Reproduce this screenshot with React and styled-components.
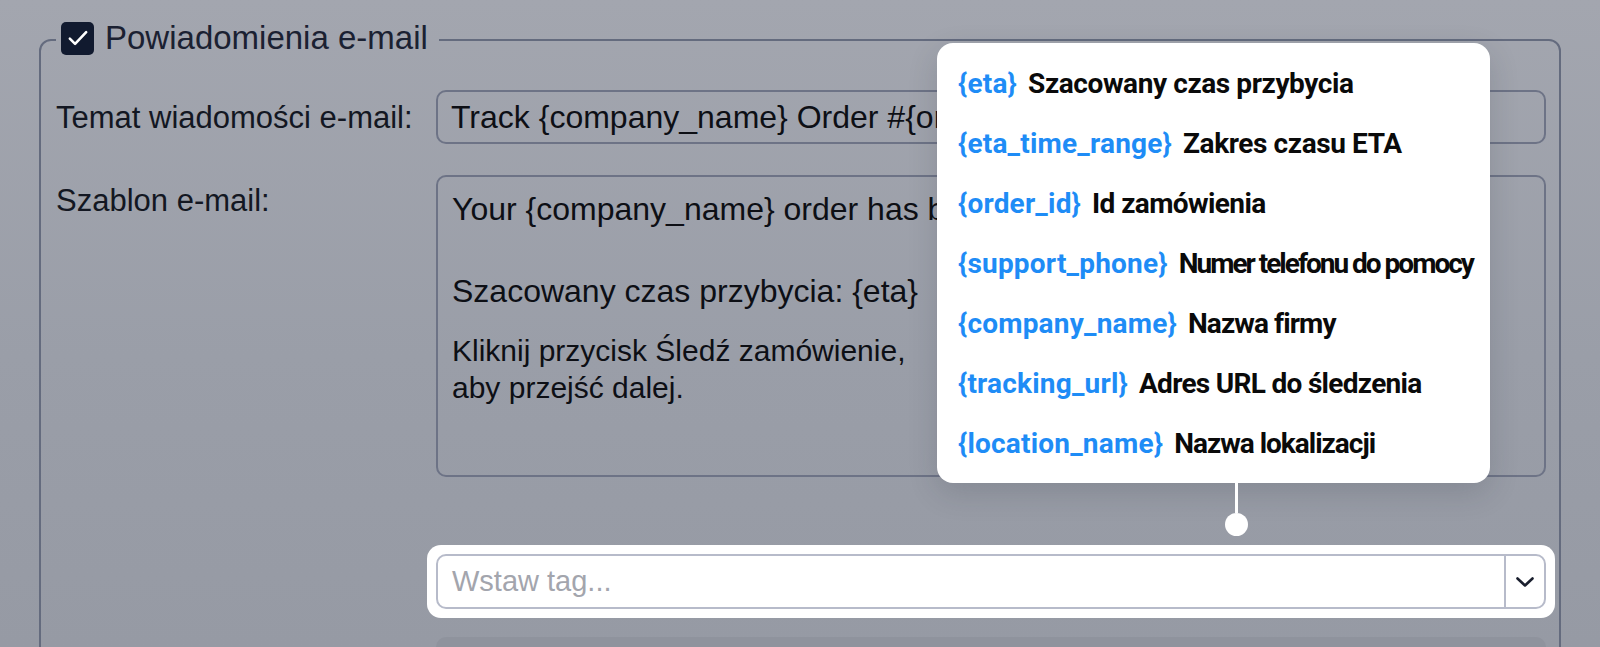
import React from 'react'
import styled, { createGlobalStyle } from 'styled-components'

const GlobalStyle = createGlobalStyle`
    html, body {
        margin: 0;
        height: 100%;
        overflow: hidden;
    }
    body {
        background: linear-gradient(180deg, #a3a6af 0%, #9a9ea8 55%, #969aa4 100%);
        font-family: "Liberation Sans", Arial, sans-serif;
        color: #121520;
    }
`

const Page = styled.div`
    padding: 20px 39px 0;
`

const Fieldset = styled.fieldset`
    margin: 0;
    min-width: 0;
    border: 2px solid #646b7e;
    border-radius: 12px;
    padding: 30px 13px 0 15px;
`

const Legend = styled.legend`
    box-sizing: border-box;
    display: flex;
    align-items: center;
    gap: 11px;
    height: 40px;
    padding: 0 11px 4px 5px;
    font-size: 33px;
    color: #1b2132;
`

const Checkbox = styled.span`
    width: 33px;
    height: 33px;
    border-radius: 5px;
    background: #111a2f;
    display: grid;
    place-items: center;
`

const Row = styled.div`
    display: grid;
    grid-template-columns: 380px 1fr;
    align-items: ${props => props.$align || 'center'};
    margin-top: ${props => props.$gap || 0}px;
`

const Label = styled.label`
    font-size: 31px;
    line-height: 37px;
    color: #131722;
    padding-top: ${props => props.$top || 0}px;
`

const TextInput = styled.div`
    box-sizing: border-box;
    height: 54px;
    border: 2px solid #6d7386;
    border-radius: 10px;
    padding: 0 13px;
    display: flex;
    align-items: center;
    font-size: 32px;
    color: #0d0f15;
    white-space: nowrap;
    overflow: hidden;
`

const Template = styled.div`
    box-sizing: border-box;
    height: 302px;
    border: 2px solid #6d7386;
    border-radius: 10px;
    padding: 14px 14px;
    overflow: hidden;
`

const TemplateLine = styled.p`
    margin: 0 0 ${props => props.$after || 0}px;
    font-size: ${props => props.$size}px;
    line-height: 37px;
    color: #0d0f15;
    white-space: nowrap;
`

const TagPicker = styled.div`
    position: relative;
    margin: 0 -9px;
    padding: 9px;
    background: #ffffff;
    border-radius: 14px;
`

const Select = styled.div`
    box-sizing: border-box;
    display: flex;
    height: 55px;
    border: 2px solid #b7bbca;
    border-radius: 10px;
    background: #ffffff;
`

const Placeholder = styled.span`
    flex: 1;
    display: flex;
    align-items: center;
    padding-left: 14px;
    font-size: 29px;
    color: #a3a5ad;
`

const Toggle = styled.span`
    box-sizing: border-box;
    width: 40px;
    border-left: 2px solid #b7bbca;
    display: grid;
    place-items: center;
`

const Popup = styled.div`
    position: absolute;
    left: 510px;
    bottom: calc(100% + 62px);
    width: 553px;
    box-sizing: border-box;
    padding: 10px 21px;
    background: #ffffff;
    border-radius: 16px;
    box-shadow: 0 10px 30px rgba(30, 35, 50, 0.16);
    font-family: Roboto, "Liberation Sans", Arial, sans-serif;
`

const TagRow = styled.div`
    height: 60px;
    display: flex;
    align-items: center;
    gap: 11px;
    font-size: 28px;
    font-weight: 700;
    white-space: nowrap;
`

const TagCode = styled.span`
    color: #1e8cf6;
    letter-spacing: 0.2px;
`

const TagName = styled.span`
    color: #0a0a0a;
    letter-spacing: ${props => props.$tracking}px;
`

const Connector = styled.div`
    position: absolute;
    top: 100%;
    left: 288px;
    width: 23px;
    display: flex;
    flex-direction: column;
    align-items: center;
`

const Stem = styled.div`
    width: 3px;
    height: 30px;
    background: #ffffff;
`

const Dot = styled.div`
    width: 23px;
    height: 23px;
    border-radius: 50%;
    background: #ffffff;
`

const DisabledField = styled.div`
    height: 60px;
    border-radius: 10px;
    background: #8f939d;
`

const tags = [
    { code: '{eta}', name: 'Szacowany czas przybycia', tracking: -0.4 },
    { code: '{eta_time_range}', name: 'Zakres czasu ETA', tracking: -0.4 },
    { code: '{order_id}', name: 'Id zamówienia', tracking: -0.6 },
    { code: '{support_phone}', name: 'Numer telefonu do pomocy', tracking: -2 },
    { code: '{company_name}', name: 'Nazwa firmy', tracking: -0.9 },
    { code: '{tracking_url}', name: 'Adres URL do śledzenia', tracking: -0.7 },
    { code: '{location_name}', name: 'Nazwa lokalizacji', tracking: -1 },
]

const App = () => {
    return (
        <Page>
            <GlobalStyle />
            <Fieldset>
                <Legend>
                    <Checkbox>
                        <svg width="28" height="28" viewBox="0 0 24 24" fill="none">
                            <path d="M5 12.5l4.5 4.5 9.5-10" stroke="#fff" strokeWidth="2.2" strokeLinecap="round" strokeLinejoin="round" />
                        </svg>
                    </Checkbox>
                    Powiadomienia e-mail
                </Legend>

                <Row>
                    <Label>Temat wiadomości e-mail:</Label>
                    <TextInput>Track {'{company_name}'} Order #{'{order_id}'}</TextInput>
                </Row>

                <Row $gap={31} $align="start">
                    <Label $top={7}>Szablon e-mail:</Label>
                    <Template>
                        <TemplateLine $size={32} $after={45}>Your {'{company_name}'} order has been shipped!</TemplateLine>
                        <TemplateLine $size={32} $after={22}>Szacowany czas przybycia: {'{eta}'}</TemplateLine>
                        <TemplateLine $size={30}>
                            Kliknij przycisk Śledź zamówienie,
                            <br />
                            aby przejść dalej.
                        </TemplateLine>
                    </Template>
                </Row>

                <Row $gap={68}>
                    <span />
                    <TagPicker>
                        <Popup>
                            {tags.map(tag => (
                                <TagRow key={tag.code}>
                                    <TagCode>{tag.code}</TagCode>
                                    <TagName $tracking={tag.tracking}>{tag.name}</TagName>
                                </TagRow>
                            ))}
                            <Connector>
                                <Stem />
                                <Dot />
                            </Connector>
                        </Popup>
                        <Select>
                            <Placeholder>Wstaw tag...</Placeholder>
                            <Toggle>
                                <svg width="20" height="12" viewBox="0 0 20 12" fill="none">
                                    <path d="M2.5 2.5l7.5 7 7.5-7" stroke="#1a1f2e" strokeWidth="2.6" strokeLinecap="round" strokeLinejoin="round" />
                                </svg>
                            </Toggle>
                        </Select>
                    </TagPicker>
                </Row>

                <Row $gap={19}>
                    <span />
                    <DisabledField />
                </Row>
            </Fieldset>
        </Page>
    )
}

export default App
